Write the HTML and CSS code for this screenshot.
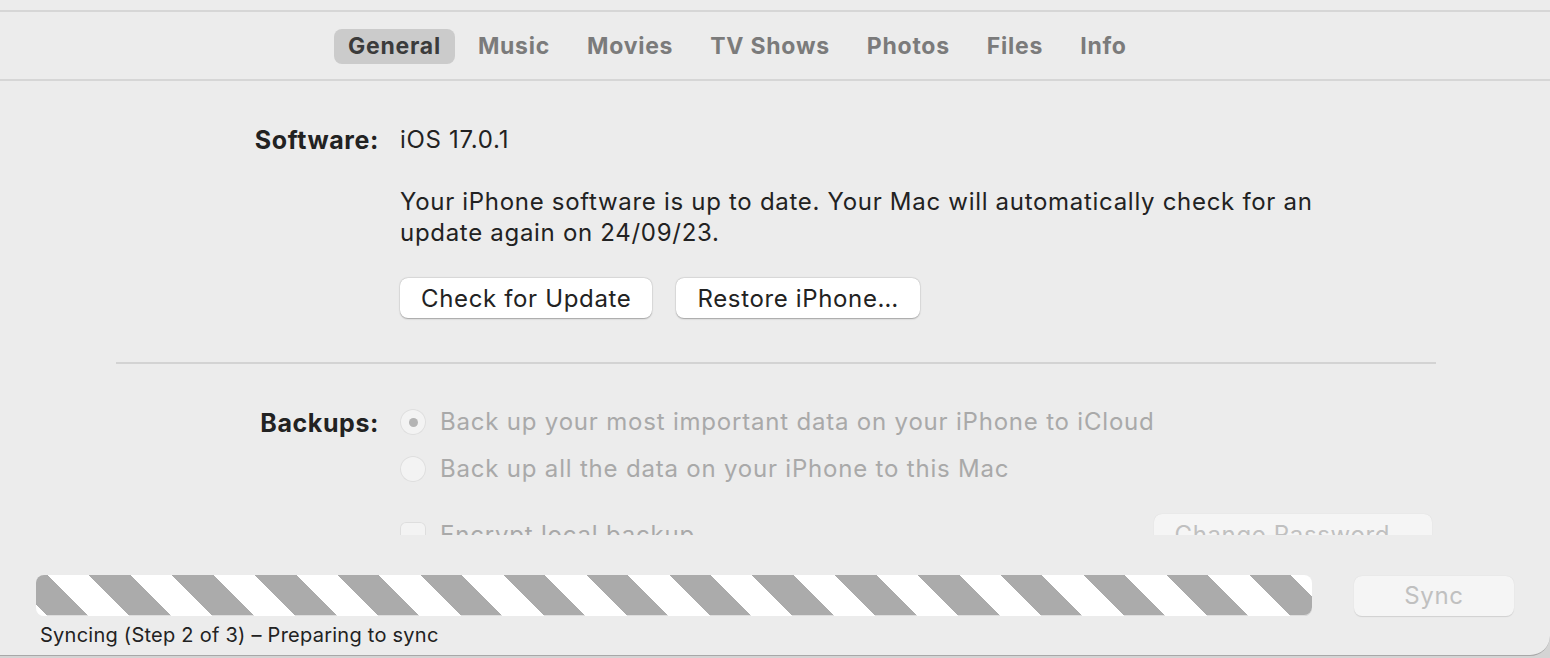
FILE: index.html
```html
<!DOCTYPE html>
<html lang="en">
<head>
    <meta charset="UTF-8">
    <meta name="viewport" content="width=device-width, initial-scale=1.0">
    <title>iPhone - General</title>
    <link rel="stylesheet" href="styles.css">
</head>
<body>
    <div class="window">
        <div class="top-strip"></div>
        <nav class="tabs">
            <span class="tab active">General</span>
            <span class="tab">Music</span>
            <span class="tab">Movies</span>
            <span class="tab">TV Shows</span>
            <span class="tab">Photos</span>
            <span class="tab">Files</span>
            <span class="tab">Info</span>
        </nav>

        <div class="pane">
            <div class="row software-row">
                <div class="label">Software:</div>
                <div class="value">
                    <p class="version">iOS 17.0.1</p>
                    <p class="note">Your iPhone software is up to date. Your Mac will automatically check for an update again on 24/09/23.</p>
                    <div class="buttons">
                        <button class="btn">Check for Update</button>
                        <button class="btn">Restore iPhone…</button>
                    </div>
                </div>
            </div>

            <hr class="divider">

            <div class="row backups-row">
                <div class="label">Backups:</div>
                <div class="value disabled">
                    <label class="option"><span class="radio checked"></span>Back up your most important data on your iPhone to iCloud</label>
                    <label class="option"><span class="radio"></span>Back up all the data on your iPhone to this Mac</label>
                    <div class="encrypt">
                        <label class="option"><span class="checkbox"></span>Encrypt local backup</label>
                        <button class="btn btn-disabled">Change Password…</button>
                    </div>
                </div>
            </div>
        </div>

        <footer class="footer">
            <div class="sync-bar">
                <div class="progress"></div>
                <button class="btn btn-disabled sync-btn">Sync</button>
            </div>
            <p class="status">Syncing (Step 2 of 3) – Preparing to sync</p>
        </footer>
    </div>
</body>
</html>
```

FILE: styles.css
```css
body {
    margin: 0;
    background-color: #d4d4d4;
    font-family: 'Inter', 'Noto Sans', sans-serif;
    color: #222222;
}
.window {
    height: 655px;
    background-color: #ececec;
    border-bottom: 1px solid #a8a8a8;
    border-bottom-right-radius: 20px;
    overflow: hidden;
}
.top-strip {
    height: 10px;
}
.tabs {
    display: flex;
    align-items: center;
    gap: 9px;
    height: 65px;
    padding: 2px 0 0 334px;
    border-top: 2px solid #d6d6d6;
    border-bottom: 2px solid #d6d6d6;
}
.tab {
    padding: 0 14px;
    height: 35px;
    line-height: 35px;
    border-radius: 8px;
    font-size: 23px;
    font-weight: 700;
    letter-spacing: 0.75px;
    color: #7b7b7b;
}
.tab.active {
    background-color: #cbcbcb;
    color: #3b3b3b;
}
.pane {
    height: 454px;
    overflow: hidden;
    padding: 0 114px 0 116px;
}
.row {
    display: grid;
    grid-template-columns: 263px 1fr;
    column-gap: 21px;
}
.label {
    text-align: right;
    font-size: 25px;
    font-weight: 700;
    letter-spacing: 0.6px;
    line-height: 30px;
    color: #222222;
}
.software-row {
    margin-top: 44px;
}
.value p {
    margin: 0;
    font-size: 24px;
    letter-spacing: 0.7px;
    line-height: 30px;
}
.version {
    margin-bottom: 31px !important;
}
.note {
    line-height: 31px !important;
    max-width: 930px;
}
.buttons {
    display: flex;
    gap: 24px;
    margin-top: 30px;
}
.btn {
    font-family: inherit;
    font-size: 24px;
    letter-spacing: 0.65px;
    white-space: nowrap;
    color: #222222;
    background: #ffffff;
    border: none;
    border-radius: 8px;
    height: 40px;
    padding: 0 21px;
    box-shadow: 0 0.5px 1.5px rgba(0, 0, 0, 0.3), 0 0 0 0.5px rgba(0, 0, 0, 0.05);
}
.divider {
    border: none;
    border-top: 2px solid #d3d3d3;
    margin: 44px 0 43px 0;
}
.backups-row .label {
    padding-top: 1px;
}
.disabled {
    color: #a9a9a9;
}
.option {
    display: flex;
    align-items: center;
    gap: 14px;
    font-size: 24px;
    letter-spacing: 0.8px;
    line-height: 30px;
    height: 30px;
    margin-bottom: 17px;
}
.radio {
    width: 26px;
    height: 26px;
    border-radius: 50%;
    background: #f3f3f3;
    box-shadow: inset 0 0 0 1px #dedede;
    display: flex;
    align-items: center;
    justify-content: center;
}
.radio.checked::after {
    content: '';
    width: 9px;
    height: 9px;
    border-radius: 50%;
    background: #b4b4b4;
}
.checkbox {
    width: 26px;
    height: 26px;
    border-radius: 6px;
    background: #f3f3f3;
    box-shadow: inset 0 0 0 1px #dedede;
}
.encrypt {
    display: flex;
    justify-content: space-between;
    align-items: flex-start;
    margin-top: 30px;
}
.encrypt .option {
    margin-top: 6px;
}
.btn-disabled {
    background: #f5f5f5;
    color: #c0c0c0;
    box-shadow: 0 0.5px 1px rgba(0, 0, 0, 0.12);
}
.encrypt .btn-disabled {
    width: 278px;
    padding: 0;
    margin-right: 4px;
}
.footer {
    padding: 40px 36px 0 36px;
}
.sync-bar {
    display: flex;
    align-items: center;
    gap: 42px;
}
.progress {
    flex: 1;
    height: 41px;
    border-radius: 8px;
    background: repeating-linear-gradient(45deg, #ffffff 0, #ffffff 7.8px, #ababab 7.8px, #ababab 37.1px, #ffffff 37.1px, #ffffff 58.6px);
    box-shadow: inset 0 -1px 0 rgba(255, 255, 255, 0.6);
}
.sync-btn {
    width: 160px;
    font-size: 24px;
}
.status {
    margin: 6px 0 0 4px;
    font-size: 20px;
    letter-spacing: 0.25px;
    line-height: 26px;
    color: #222222;
}
```
